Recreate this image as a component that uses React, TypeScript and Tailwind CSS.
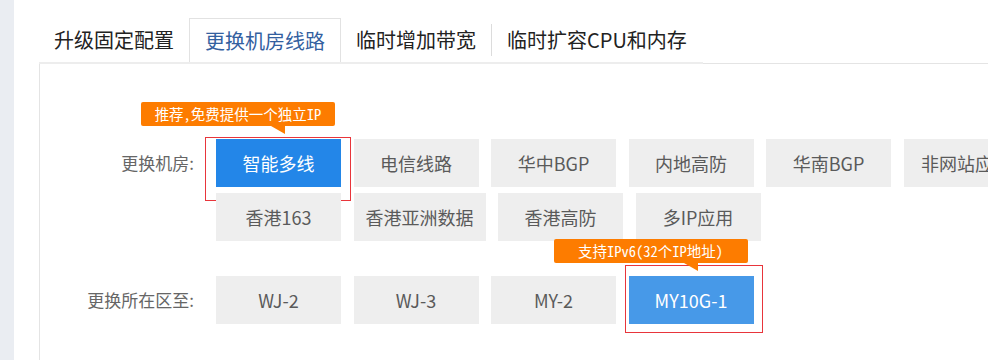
import type { ReactNode } from 'react';
import { clsx } from 'clsx';

// Tabs + room / zone selector panel

const FONT = { fontFamily: '"Noto Sans CJK SC", "Noto Sans", sans-serif' };
const TIP_FONT = {
  fontFamily: '"Noto Sans Mono CJK SC", "Liberation Mono", "Noto Sans CJK SC", monospace',
};

const tabs = ['升级固定配置', '更换机房线路', '临时增加带宽', '临时扩容CPU和内存'];
const activeTab = 1;

const rooms = [
  '智能多线',
  '电信线路',
  '华中BGP',
  '内地高防',
  '华南BGP',
  '非网站应用',
  '香港163',
  '香港亚洲数据',
  '香港高防',
  '多IP应用',
];

const zones = ['WJ-2', 'WJ-3', 'MY-2', 'MY10G-1'];

function Tip({ children }: { children: ReactNode }) {
  return (
    <div className="absolute left-[-75px] top-[-37px] z-10 w-[194px]">
      <div
        className="flex h-[24px] items-center justify-center rounded-[2px] bg-[#fd7c00] text-[14.5px] leading-none text-white whitespace-nowrap"
        style={TIP_FONT}
      >
        {children}
      </div>
      <div className="absolute left-[130px] top-[24px] h-0 w-0 border-t-[8px] border-l-[14px] border-t-[#fd7c00] border-l-transparent" />
    </div>
  );
}

function Option({
  label,
  kind,
  tip,
  box,
}: {
  label: string;
  kind?: 'active' | 'hover';
  tip?: string;
  box?: string;
}) {
  return (
    <div className="relative">
      {box && <div className={clsx('absolute border border-[#e8353b]', box)} />}
      {tip && <Tip>{tip}</Tip>}
      <div
        className={clsx(
          'relative flex h-[48px] min-w-[125px] items-center justify-center px-3 text-[18px]',
          kind === 'active' && 'bg-[#2386e8] text-white',
          kind === 'hover' && 'bg-[#4799e8] text-white',
          !kind && 'bg-[#eeeeee] text-[#5a5a5a]'
        )}
      >
        {label}
      </div>
    </div>
  );
}

export default function App() {
  return (
    <div className="flex h-[360px] w-[988px] overflow-hidden bg-white" style={FONT}>
      <div className="w-[14px] shrink-0 bg-[#eaedf2]" />

      <div className="flex min-w-0 flex-1 flex-col pl-[25px] pt-[18px]">
        {/* Tabs */}
        <div className="relative z-10 flex h-[46px] w-[664px] shrink-0 items-center border-b-2 border-[#ededed] -mb-px">
          {tabs.map((t, i) => (
            <div key={t} className="flex h-full items-center">
              {i === 3 && <div className="h-[32px] w-px bg-[#dcdcdc]" />}
              <div
                className={clsx(
                  'flex h-full items-center px-[15px] text-[20px]',
                  i === activeTab
                    ? 'h-[48px] self-start border-x border-t border-[#e2e2e2] bg-white text-[#33609f]'
                    : 'text-[#222]'
                )}
              >
                {t}
              </div>
            </div>
          ))}
        </div>

        {/* Panel */}
        <div className="w-[1100px] flex-1 border-l border-t border-[#e4e4e4] pt-[75px]">
          <div className="flex">
            <div className="w-[154px] shrink-0 pt-[11px] text-right text-[17px] text-[#666]">更换机房:</div>
            <div className="ml-[22px] flex w-[1040px] flex-wrap gap-x-[12.5px] gap-y-[6px]">
              {rooms.map((r, i) =>
                i === 0 ? (
                  <Option
                    key={r}
                    label={r}
                    kind="active"
                    tip="推荐,免费提供一个独立IP"
                    box="left-[-11px] top-[-2px] h-[64px] w-[146px]"
                  />
                ) : (
                  <Option key={r} label={r} />
                )
              )}
            </div>
          </div>

          <div className="mt-[35px] flex">
            <div className="w-[154px] shrink-0 pt-[11px] text-right text-[17px] text-[#666]">更换所在区至:</div>
            <div className="ml-[22px] flex flex-wrap gap-x-[12.5px]">
              {zones.map((z, i) =>
                i === 3 ? (
                  <Option
                    key={z}
                    label={z}
                    kind="hover"
                    tip="支持IPv6(32个IP地址)"
                    box="left-[-4px] top-[-11px] h-[68px] w-[138px]"
                  />
                ) : (
                  <Option key={z} label={z} />
                )
              )}
            </div>
          </div>
        </div>
      </div>
    </div>
  );
}
